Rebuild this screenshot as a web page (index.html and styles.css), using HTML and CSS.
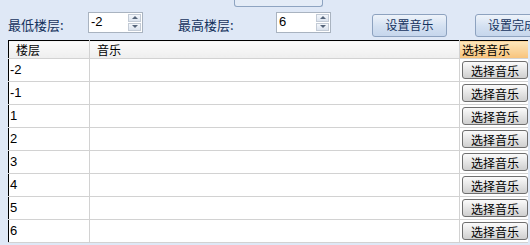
FILE: index.html
```html
<!DOCTYPE html>
<html lang="zh-CN">
<head>
  <meta charset="UTF-8">
  <title>楼层音乐设置</title>
  <link rel="stylesheet" href="styles.css">
</head>
<body>
  <div class="page">
    <!-- 上方标签页的底边 -->
    <div class="tab-strip">
      <div class="tab-edge"></div>
    </div>

    <!-- 工具栏 -->
    <div class="toolbar">
      <span class="label label-low">最低楼层:</span>
      <div class="spinner">
        <span class="spinner-value">-2</span>
        <div class="spinner-arrows">
          <span class="arrow arrow-up"></span>
          <span class="arrow arrow-down"></span>
        </div>
      </div>
      <span class="label label-high">最高楼层:</span>
      <div class="spinner">
        <span class="spinner-value">6</span>
        <div class="spinner-arrows">
          <span class="arrow arrow-up"></span>
          <span class="arrow arrow-down"></span>
        </div>
      </div>
      <button class="tool-btn btn-set">设置音乐</button>
      <button class="tool-btn btn-done">设置完成</button>
    </div>

    <!-- 楼层列表 -->
    <table class="grid">
      <thead>
        <tr>
          <th class="col-floor">楼层</th>
          <th class="col-music">音乐</th>
          <th class="col-pick active">选择音乐</th>
        </tr>
      </thead>
      <tbody>
        <tr><td>-2</td><td></td><td class="pick"><button class="row-btn">选择音乐</button></td></tr>
        <tr><td>-1</td><td></td><td class="pick"><button class="row-btn">选择音乐</button></td></tr>
        <tr><td>1</td><td></td><td class="pick"><button class="row-btn">选择音乐</button></td></tr>
        <tr><td>2</td><td></td><td class="pick"><button class="row-btn">选择音乐</button></td></tr>
        <tr><td>3</td><td></td><td class="pick"><button class="row-btn">选择音乐</button></td></tr>
        <tr><td>4</td><td></td><td class="pick"><button class="row-btn">选择音乐</button></td></tr>
        <tr><td>5</td><td></td><td class="pick"><button class="row-btn">选择音乐</button></td></tr>
        <tr><td>6</td><td></td><td class="pick"><button class="row-btn">选择音乐</button></td></tr>
      </tbody>
    </table>
  </div>
</body>
</html>
```

FILE: styles.css
```css
body {
  margin: 0;
  padding: 0;
  background-color: #dfe8f6;
  font-family: "Liberation Sans", "Noto Sans CJK SC", sans-serif;
  font-size: 12px;
  overflow: hidden;
}

.page {
  width: 530px;
  height: 245px;
  overflow: hidden;
}

.tab-strip {
  height: 7px;
  padding-left: 234px;
}

.tab-edge {
  width: 87px;
  height: 6px;
  border: 1px solid #8ea4c1;
  border-top: none;
  border-radius: 0 0 3px 3px;
  background-color: #e4ecf7;
}

.toolbar {
  display: flex;
  align-items: center;
  height: 33px;
  padding-left: 8px;
  white-space: nowrap;
}

.toolbar > * {
  flex-shrink: 0;
}

.label {
  color: #15335e;
  font-family: "Noto Sans CJK SC", sans-serif;
  font-size: 13px;
  line-height: 16px;
  margin-top: 3px;
}

.label-low {
  width: 80px;
}

.label-high {
  width: 98px;
  margin-left: 35px;
}

.spinner {
  display: flex;
  align-items: stretch;
  width: 53px;
  height: 19px;
  border: 1px solid #a9b3c0;
  background-color: #fff;
  margin-top: -3px;
}

.spinner-value {
  flex: 1;
  padding-left: 2px;
  font-size: 13px;
  line-height: 17px;
  color: #000;
}

.spinner-arrows {
  display: flex;
  flex-direction: column;
  gap: 1px;
  width: 13px;
  padding: 1px 1px 1px 0;
}

.arrow {
  flex: 1;
  display: flex;
  align-items: center;
  justify-content: center;
  border: 1px solid #c3cbd6;
  background: linear-gradient(#f4f7fb, #dbe3ee);
}

.arrow::after {
  content: "";
  border-left: 3px solid transparent;
  border-right: 3px solid transparent;
}

.arrow-up::after {
  border-bottom: 3px solid #56657a;
}

.arrow-down::after {
  border-top: 3px solid #56657a;
}

.tool-btn {
  height: 23px;
  width: 75px;
  padding: 0;
  border: 1px solid #8da2bf;
  border-radius: 3px;
  background: linear-gradient(#eef3fa, #d3e0f1 55%, #c6d6ec);
  color: #15335e;
  font-family: "Noto Sans CJK SC", sans-serif;
  font-size: 12px;
  line-height: 16px;
  margin-top: 3px;
}

.btn-set {
  margin-left: 41px;
}

.btn-done {
  margin-left: 28px;
  text-align: left;
  padding-left: 12px;
}

.grid {
  margin-left: 8px;
  border-collapse: collapse;
  table-layout: fixed;
  width: 520px;
  background-color: #fff;
  border-top: 1px solid #000;
  border-left: 1px solid #000;
}

.grid th {
  height: 17px;
  padding: 0 0 0 7px;
  text-align: left;
  font-weight: normal;
  font-family: "Noto Sans CJK SC", sans-serif;
  font-size: 12px;
  line-height: 16px;
  color: #000;
  background: linear-gradient(#fbfbfb, #eeeeee);
  border-right: 1px solid #d2d2d2;
  border-bottom: 1px solid #d2d2d2;
}

.grid th.active {
  background: linear-gradient(#fde7bd, #f8c37a);
  border-right: none;
  padding-left: 2px;
}

.col-floor {
  width: 73px;
}

.col-music {
  width: 362px;
}

.grid td {
  height: 22px;
  padding: 0 0 0 1px;
  font-size: 13px;
  line-height: 16px;
  color: #000;
  border-right: 1px solid #d2d2d2;
  border-bottom: 1px solid #d2d2d2;
  vertical-align: middle;
}

.grid td.pick {
  padding: 0 0 0 2px;
  border-right: none;
}

.row-btn {
  display: block;
  width: 66px;
  height: 18px;
  padding: 0;
  border: 1px solid #6f6f6f;
  border-radius: 3px;
  background: linear-gradient(#fbfbfb, #e3e3e3 55%, #cfcfcf);
  color: #000;
  font-family: "Noto Sans CJK SC", sans-serif;
  font-size: 12px;
  line-height: 15px;
}
```
